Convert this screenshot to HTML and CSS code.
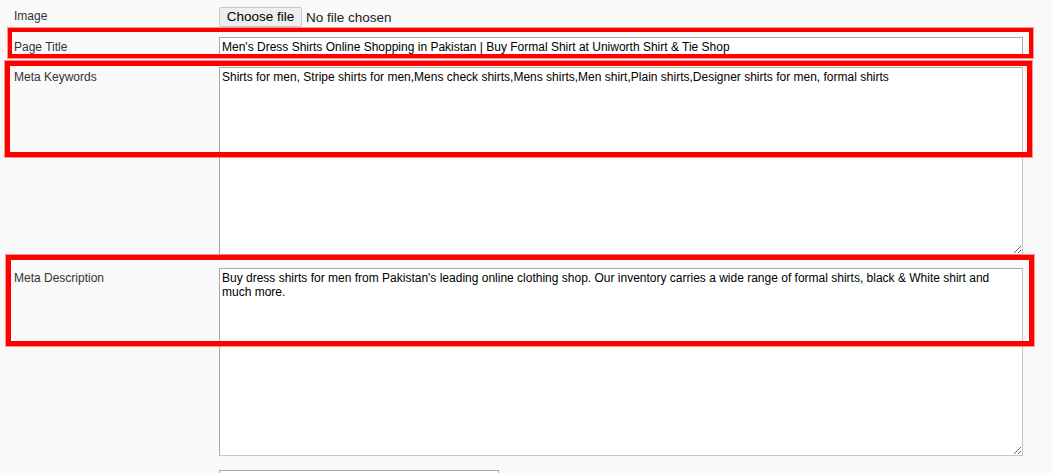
FILE: index.html
```html
<!DOCTYPE html>
<html lang="en">
<head>
    <meta charset="UTF-8">
    <title>SEO fields</title>
    <link rel="stylesheet" href="styles.css">
</head>
<body>
    <div class="page">
        <div class="form">
            <div class="row row-image">
                <label class="label">Image</label>
                <div class="file">
                    <button class="file-button">Choose file</button>
                    <span class="file-name">No file chosen</span>
                </div>
            </div>

            <div class="row">
                <label class="label">Page Title</label>
                <input class="field" type="text" value="Men's Dress Shirts Online Shopping in Pakistan | Buy Formal Shirt at Uniworth Shirt &amp; Tie Shop">
            </div>

            <div class="row">
                <label class="label label-area">Meta Keywords</label>
                <textarea class="field area">Shirts for men, Stripe shirts for men,Mens check shirts,Mens shirts,Men shirt,Plain shirts,Designer shirts for men, formal shirts</textarea>
            </div>

            <div class="row row-desc">
                <label class="label label-area">Meta Description</label>
                <textarea class="field area">Buy dress shirts for men from Pakistan's leading online clothing shop. Our inventory carries a wide range of formal shirts, black &amp; White shirt and much more.</textarea>
            </div>

            <div class="row row-last">
                <span class="label"></span>
                <input class="field short" type="text">
            </div>
        </div>

        <!-- red highlight boxes -->
        <div class="mark mark-title"></div>
        <div class="mark mark-keywords"></div>
        <div class="mark mark-desc"></div>
    </div>
</body>
</html>
```

FILE: styles.css
```css
body {
    margin: 0;
    background-color: #f9f9f9;
    font-family: 'Liberation Sans', Arial, sans-serif;
    font-size: 12px;
    color: #333;
    overflow: hidden;
}

.page {
    position: relative;
    height: 473px;
}

/* Form grid */
.form {
    padding: 7px 0 0 14px;
    display: flex;
    flex-direction: column;
    gap: 10px;
}

.row {
    display: grid;
    grid-template-columns: 205px 804px;
    align-items: start;
}

.row-desc {
    margin-top: 3px;
}

.row-last {
    margin-top: 4px;
}

.label {
    padding-top: 3px;
    line-height: 14px;
    color: #333;
}

.label-area {
    padding-top: 3px;
}

.row-image .label {
    padding-top: 2px;
}

/* File input */
.file {
    display: flex;
    align-items: center;
    gap: 4px;
    height: 20px;
}

.file-button {
    font-family: 'Liberation Sans', Arial, sans-serif;
    font-size: 13.5px;
    color: #000;
    background-color: #efefef;
    border: 1px solid #c8c8c8;
    border-radius: 2px;
    height: 20px;
    width: 83px;
    padding: 0;
    line-height: 18px;
}

.file-name {
    font-size: 13.5px;
    color: #222;
}

/* Fields */
.field {
    box-sizing: border-box;
    width: 804px;
    height: 20px;
    margin: 0;
    padding: 1px 2px;
    border: 1px solid #aaa;
    background-color: #fff;
    font-family: 'Liberation Sans', Arial, sans-serif;
    font-size: 12px;
    line-height: 14px;
    color: #000;
    outline: none;
}

.area {
    height: 188px;
    padding: 2px 2px;
    resize: vertical;
    border-color: #aaa #c6c6c6 #c6c6c6 #aaa;
}

.short {
    width: 280px;
}

/* Highlight boxes */
.mark {
    position: absolute;
    box-sizing: border-box;
    border: 4px solid #ff0000;
    box-shadow: 0 0 0 1px rgba(255, 80, 80, 0.6);
}

.mark-title {
    left: 8px;
    top: 28px;
    width: 1025px;
    height: 30px;
}

.mark-keywords {
    left: 5px;
    top: 61px;
    width: 1027px;
    height: 96px;
    border-width: 5px;
}

.mark-desc {
    left: 6px;
    top: 255px;
    width: 1028px;
    height: 91px;
    border-width: 5px;
}
```
